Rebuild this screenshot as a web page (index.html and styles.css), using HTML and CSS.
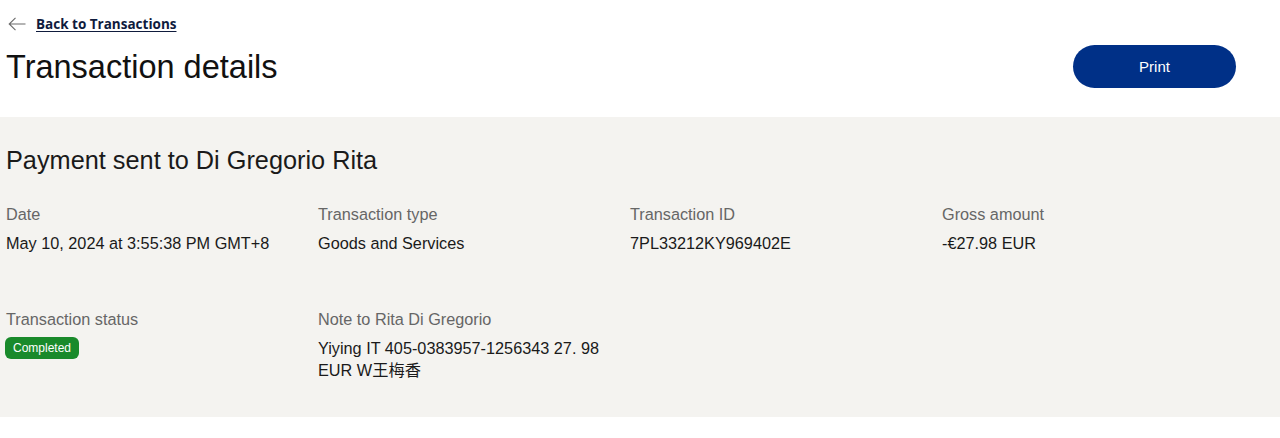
FILE: index.html
```html
<!DOCTYPE html>
<html lang="en">
<head>
<meta charset="utf-8">
<title>Transaction details</title>
<link rel="stylesheet" href="styles.css">
</head>
<body>
<header class="top">
  <a class="back" href="#">
    <svg class="back-icon" width="18" height="14" viewBox="0 0 18 14" aria-hidden="true"><path d="M17.5 7H1 M7.5 0.8 L1.2 7 L7.5 13.2" fill="none" stroke="#6b6b6b" stroke-width="1.1"/></svg>
    <span class="back-text">Back to Transactions</span>
  </a>
  <div class="title-row">
    <h1 class="title">Transaction details</h1>
    <button class="print">Print</button>
  </div>
</header>
<section class="panel">
  <h2 class="heading">Payment sent to Di Gregorio Rita</h2>
  <div class="grid">
    <div class="cell">
      <div class="label">Date</div>
      <div class="value">May 10, 2024 at 3:55:38 PM GMT+8</div>
    </div>
    <div class="cell">
      <div class="label">Transaction type</div>
      <div class="value">Goods and Services</div>
    </div>
    <div class="cell">
      <div class="label">Transaction ID</div>
      <div class="value">7PL33212KY969402E</div>
    </div>
    <div class="cell">
      <div class="label">Gross amount</div>
      <div class="value">-€27.98 EUR</div>
    </div>
    <div class="cell">
      <div class="label">Transaction status</div>
      <div class="value"><span class="badge">Completed</span></div>
    </div>
    <div class="cell">
      <div class="label">Note to Rita Di Gregorio</div>
      <div class="value note">Yiying IT 405-0383957-1256343 27. 98 EUR W王梅香</div>
    </div>
  </div>
</section>
</body>
</html>
```
FILE: styles.css
```css
html, body {
  margin: 0;
  padding: 0;
  background: #ffffff;
}
body {
  font-family: "Liberation Sans", Arial, "Noto Sans CJK SC", sans-serif;
  color: #1a1a1a;
}
.top {
  padding: 15px 44px 0 6px;
}
.back {
  display: inline-flex;
  align-items: center;
  gap: 10px;
  height: 18px;
  text-decoration: none;
  padding-left: 2px;
}
.back-icon {
  display: block;
}
.back-text {
  font-family: "Open Sans", sans-serif;
  font-weight: 700;
  font-size: 13.5px;
  line-height: 18px;
  color: #0f1b3d;
  text-decoration: underline;
  text-underline-offset: 2px;
}
.title-row {
  display: flex;
  justify-content: space-between;
  align-items: center;
  margin-top: 10px;
}
.title {
  margin: 0;
  font-weight: 400;
  font-size: 32.5px;
  line-height: 40px;
  color: #111111;
}
.print {
  width: 163px;
  height: 43px;
  border: none;
  border-radius: 22px;
  background: #003087;
  color: #ffffff;
  font-family: "Liberation Sans", Arial, sans-serif;
  font-size: 15px;
  cursor: pointer;
}
.panel {
  margin-top: 29px;
  background: #f4f3f0;
  padding: 27px 26px 36px 6px;
}
.heading {
  margin: 0;
  font-weight: 400;
  font-size: 25.3px;
  line-height: 32px;
  color: #1a1a1a;
}
.grid {
  display: grid;
  grid-template-columns: repeat(4, 1fr);
  row-gap: 53px;
  margin-top: 26px;
}
.label {
  font-size: 16.25px;
  line-height: 24px;
  color: #666666;
  margin-bottom: 6px;
}
.value {
  font-size: 16.25px;
  line-height: 22px;
  color: #1a1a1a;
  padding-right: 30px;
}
.badge {
  display: inline-block;
  background: #198a2b;
  color: #ffffff;
  font-size: 12px;
  line-height: 22px;
  height: 22px;
  padding: 0 8px;
  border-radius: 6px;
  margin-left: -1px;
  vertical-align: top;
}
```
